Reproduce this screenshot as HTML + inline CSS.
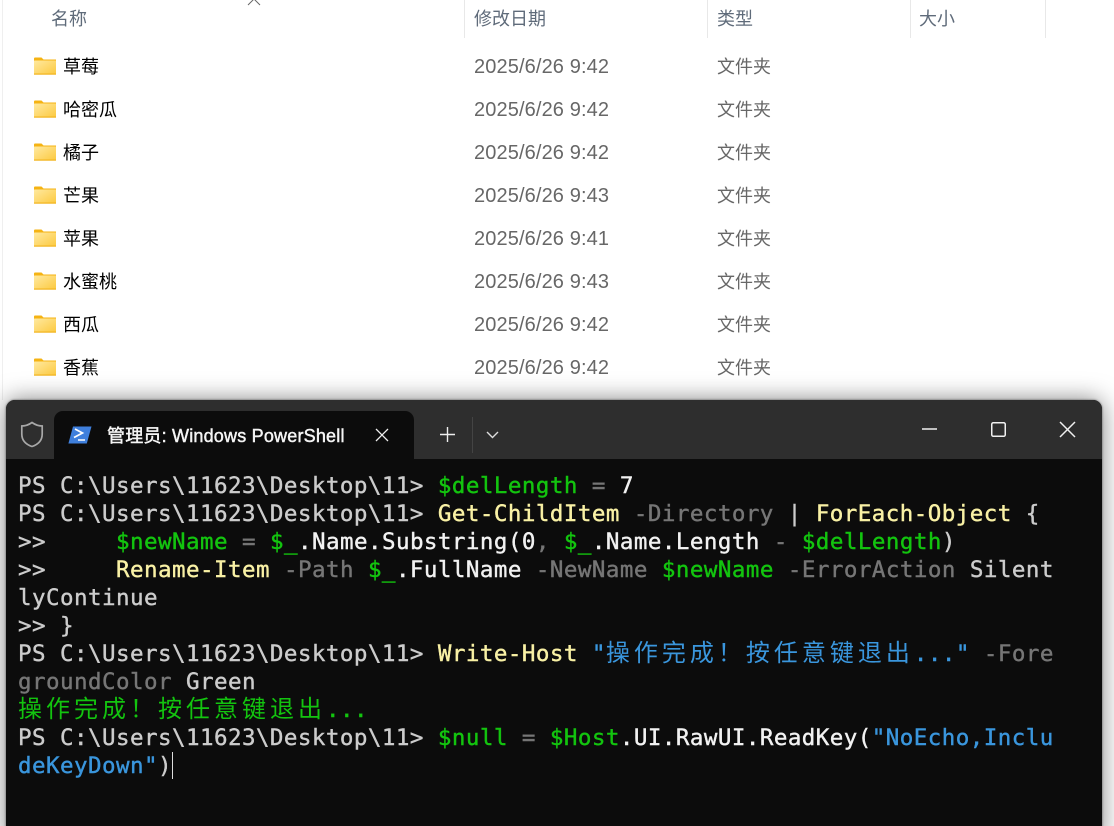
<!DOCTYPE html>
<html lang="zh">
<head>
<meta charset="utf-8">
<style>
html,body{margin:0;padding:0;width:1114px;height:826px;overflow:hidden;background:#fff;}
body{position:relative;font-family:"Liberation Sans","Noto Sans CJK SC",sans-serif;}
.a{position:absolute;white-space:pre;}
.hd{font-size:18px;line-height:24px;color:#5f6b7a;top:7px;}
.sep{position:absolute;top:0;width:1px;height:38px;background:#e8e8e8;}
.nm{position:absolute;left:63px;font-size:18px;line-height:24px;color:#000;white-space:pre;}
.dt{position:absolute;left:474px;font-size:20px;line-height:24px;letter-spacing:.12px;color:#676767;white-space:pre;}
.ty{position:absolute;left:717px;font-size:18px;line-height:24px;color:#676767;white-space:pre;}
.fd{position:absolute;left:33px;width:23px;height:18px;}
#win{position:absolute;left:6px;top:400px;width:1096px;height:440px;background:#0c0c0c;border-radius:9px 9px 0 0;overflow:hidden;box-shadow:0 0 2px rgba(0,0,0,.55),0 0 24px rgba(0,0,0,.5);}
#bar{position:absolute;left:0;top:0;width:1096px;height:59px;background:#2e2e2e;}
#tab{position:absolute;left:48px;top:11px;width:360px;height:48px;background:#0c0c0c;border-radius:9px 9px 0 0;}
.t{position:absolute;left:12px;height:28px;line-height:28px;font-family:"DejaVu Sans Mono","Liberation Mono",monospace;font-size:22.5px;letter-spacing:.45px;color:#ccc;white-space:pre;-webkit-text-stroke:.4px currentColor;}
.t i{font-style:normal;}
.p{color:#cccccc}.g{color:#13c40f}.y{color:#f9f1a5}.d{color:#767676}.w{color:#f2f2f2}.b{color:#3a96dd}
.t .c{font-family:"Noto Sans CJK SC",sans-serif;font-size:24px;letter-spacing:4px;line-height:0;-webkit-text-stroke:0;}
</style>
</head>
<body>
<div style="position:absolute;left:2px;top:0;width:1px;height:400px;background:#efefef"></div>

<svg class="a" style="left:247px;top:0" width="14" height="6" viewBox="0 0 14 6"><path d="M1 5 L7 -1 L13 5" fill="none" stroke="#666" stroke-width="1"/></svg>
<div class="a hd" style="left:51px">名称</div>
<div class="a hd" style="left:474px">修改日期</div>
<div class="a hd" style="left:717px">类型</div>
<div class="a hd" style="left:919px">大小</div>
<div class="sep" style="left:464px"></div>
<div class="sep" style="left:707px"></div>
<div class="sep" style="left:910px"></div>
<div class="sep" style="left:1045px"></div>

<svg width="0" height="0" style="position:absolute"><defs>
<linearGradient id="fg" x1="0" y1="0" x2="1" y2="1"><stop offset="0" stop-color="#ffe9a0"/><stop offset="1" stop-color="#fcc93f"/></linearGradient>
<symbol id="folder" viewBox="0 0 23 18"><path d="M1 1.5Q1 0.5 2 0.5H8.5L10.5 2.5H23V6H1Z" fill="#f5b313"/><rect x="1" y="3.5" width="22" height="14" rx="0.6" fill="url(#fg)"/><rect x="1" y="16.5" width="22" height="1.2" fill="#f2b31c"/></symbol>
</defs></svg>

<svg class="fd" style="top:57px"><use href="#folder"/></svg>
<div class="nm" style="top:55px">草莓</div><div class="dt" style="top:55px">2025/6/26 9:42</div><div class="ty" style="top:55px">文件夹</div>

<svg class="fd" style="top:100px"><use href="#folder"/></svg>
<div class="nm" style="top:98px">哈密瓜</div><div class="dt" style="top:98px">2025/6/26 9:42</div><div class="ty" style="top:98px">文件夹</div>

<svg class="fd" style="top:143px"><use href="#folder"/></svg>
<div class="nm" style="top:141px">橘子</div><div class="dt" style="top:141px">2025/6/26 9:42</div><div class="ty" style="top:141px">文件夹</div>

<svg class="fd" style="top:186px"><use href="#folder"/></svg>
<div class="nm" style="top:184px">芒果</div><div class="dt" style="top:184px">2025/6/26 9:43</div><div class="ty" style="top:184px">文件夹</div>

<svg class="fd" style="top:229px"><use href="#folder"/></svg>
<div class="nm" style="top:227px">苹果</div><div class="dt" style="top:227px">2025/6/26 9:41</div><div class="ty" style="top:227px">文件夹</div>

<svg class="fd" style="top:272px"><use href="#folder"/></svg>
<div class="nm" style="top:270px">水蜜桃</div><div class="dt" style="top:270px">2025/6/26 9:43</div><div class="ty" style="top:270px">文件夹</div>

<svg class="fd" style="top:315px"><use href="#folder"/></svg>
<div class="nm" style="top:313px">西瓜</div><div class="dt" style="top:313px">2025/6/26 9:42</div><div class="ty" style="top:313px">文件夹</div>

<svg class="fd" style="top:358px"><use href="#folder"/></svg>
<div class="nm" style="top:356px">香蕉</div><div class="dt" style="top:356px">2025/6/26 9:42</div><div class="ty" style="top:356px">文件夹</div>

<div id="win">
  <div id="bar"></div>
  <svg class="a" style="left:14px;top:21px" width="24" height="27" viewBox="0 0 24 27"><path d="M12 1.5 C8.5 4 5.5 5 1.8 5 V13 C1.8 19.5 6 23.5 12 25.5 C18 23.5 22.2 19.5 22.2 13 V5 C18.5 5 15.5 4 12 1.5Z" fill="none" stroke="#a8a8a8" stroke-width="1.7"/></svg>
  <div id="tab"></div>
  <svg class="a" style="left:62px;top:26px" width="24" height="18" viewBox="0 0 24 18"><path d="M5 0.5H23.5L18.8 17.5H0.4Z" fill="#3f7fdc"/><path d="M7 3L14.5 7L6 11.5" fill="none" stroke="#fff" stroke-width="1.7"/><path d="M10 14H17" stroke="#fff" stroke-width="1.6"/></svg>
  <div class="a" style="left:101px;top:24px;font-size:18px;letter-spacing:.2px;line-height:24px;color:#f5f5f5;font-family:'Liberation Sans','Noto Sans CJK SC',sans-serif;-webkit-text-stroke:.45px #f5f5f5">管理员: Windows PowerShell</div>
  <svg class="a" style="left:369px;top:28px" width="14" height="14" viewBox="0 0 14 14"><path d="M1 1L13 13M13 1L1 13" stroke="#eee" stroke-width="1.3"/></svg>
  <svg class="a" style="left:434px;top:27px" width="15" height="15" viewBox="0 0 15 15"><path d="M7.5 0V15M0 7.5H15" stroke="#eee" stroke-width="1.4"/></svg>
  <div class="a" style="left:466px;top:17px;width:1px;height:36px;background:#444"></div>
  <svg class="a" style="left:480px;top:31px" width="13" height="8" viewBox="0 0 13 8"><path d="M1 1L6.5 6.5L12 1" fill="none" stroke="#ddd" stroke-width="1.4"/></svg>
  <svg class="a" style="left:916px;top:27px" width="15" height="4" viewBox="0 0 15 4"><path d="M0 2H15" stroke="#f0f0f0" stroke-width="1.4"/></svg>
  <svg class="a" style="left:985px;top:22px" width="15" height="15" viewBox="0 0 15 15"><rect x=".75" y=".75" width="13.5" height="13.5" rx="1.5" fill="none" stroke="#f0f0f0" stroke-width="1.5"/></svg>
  <svg class="a" style="left:1053px;top:21px" width="17" height="17" viewBox="0 0 17 17"><path d="M1 1L16 16M16 1L1 16" stroke="#f0f0f0" stroke-width="1.5"/></svg>

  <div class="t" style="top:72px">PS C:\Users\11623\Desktop\11&gt; <i class="g">$delLength</i> <i class="d">=</i> <i class="w">7</i></div>
  <div class="t" style="top:100px">PS C:\Users\11623\Desktop\11&gt; <i class="y">Get-ChildItem</i> <i class="d">-Directory</i> | <i class="y">ForEach-Object</i> {</div>
  <div class="t" style="top:128px">&gt;&gt;     <i class="g">$newName</i> <i class="d">=</i> <i class="g">$_</i><i class="w">.Name.Substring(0</i><i class="d">,</i> <i class="g">$_</i><i class="w">.Name.Length</i> <i class="d">-</i> <i class="g">$delLength</i>)</div>
  <div class="t" style="top:156px">&gt;&gt;     <i class="y">Rename-Item</i> <i class="d">-Path</i> <i class="g">$_</i><i class="w">.FullName</i> <i class="d">-NewName</i> <i class="g">$newName</i> <i class="d">-ErrorAction</i> Silent</div>
  <div class="t" style="top:184px">lyContinue</div>
  <div class="t" style="top:212px">&gt;&gt; }</div>
  <div class="t" style="top:240px">PS C:\Users\11623\Desktop\11&gt; <i class="y">Write-Host</i> <i class="b">"<i class="c">操作完成！按任意键退出</i>..."</i> <i class="d">-Fore</i></div>
  <div class="t" style="top:268px"><i class="d">groundColor</i> Green</div>
  <div class="t" style="top:296px;color:#13c40f"><i class="c">操作完成！按任意键退出</i>...</div>
  <div class="t" style="top:324px">PS C:\Users\11623\Desktop\11&gt; <i class="g">$null</i> <i class="d">=</i> <i class="g">$Host</i><i class="w">.UI.RawUI.ReadKey(</i><i class="b">"NoEcho,Inclu</i></div>
  <div class="t" style="top:352px"><i class="b">deKeyDown"</i>)</div>
  <div class="a" style="left:166px;top:352px;width:1px;height:27px;background:#ddd"></div>
</div>
</body>
</html>
